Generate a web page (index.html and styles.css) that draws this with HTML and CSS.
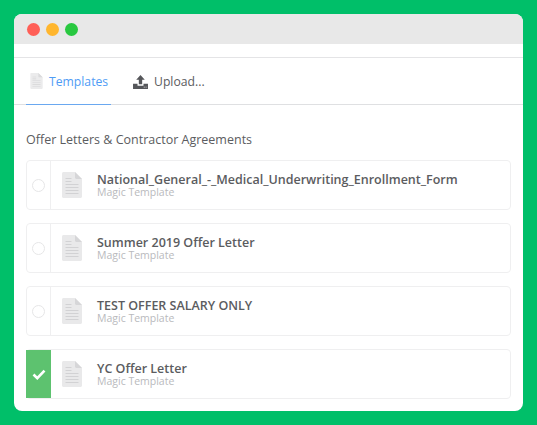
FILE: index.html
```html
<!DOCTYPE html>
<html lang="en">
<head>
    <meta charset="UTF-8">
    <meta name="viewport" content="width=device-width, initial-scale=1.0">
    <title>Templates</title>
    <link rel="stylesheet" href="styles.css">
</head>
<body>
    <svg class="icon-defs" width="0" height="0" aria-hidden="true">
        <symbol id="doc" viewBox="0 0 20 26">
            <path d="M0 1.500C0 .7.7 0 1.500 0H13l7 7v17.500c0 .8-.7 1.500-1.500 1.500h-17C.7 26 0 25.300 0 24.500z" fill="#e9e9ea"/>
            <path d="M13 0l7 7h-5.500C13.700 7 13 6.300 13 5.500z" fill="#d6d6d8"/>
            <path d="M3.500 6h6v1h-6zM3.500 9h6v1h-6zM3.500 12h13v1h-13zM3.500 15h13v1h-13zM3.500 18h13v1h-13zM3.500 21h13v1h-13z" fill="#d2d2d4"/>
        </symbol>
    </svg>

    <div class="window">
        <div class="titlebar">
            <span class="dot red"></span>
            <span class="dot yellow"></span>
            <span class="dot green"></span>
        </div>

        <div class="tabs">
            <a class="tab active" href="#">
                <svg class="tab-doc"><use href="#doc"/></svg>
                Templates
            </a>
            <a class="tab" href="#">
                <svg class="tab-upload" viewBox="0 0 16 15">
                    <path d="M8 0l4.600 5H9.800v5H6.200V5H3.400z" fill="#55565a"/>
                    <path d="M0 9.500h4.800v2h6.400v-2H16V15H0z" fill="#55565a"/>
                    <path d="M11.500 12.500h1v1h-1zM13.500 12.500h1v1h-1z" fill="#fff"/>
                </svg>
                Upload...
            </a>
        </div>

        <div class="content">
            <h2 class="section-title">Offer Letters &amp; Contractor Agreements</h2>

            <div class="template">
                <div class="select"><span class="radio"></span></div>
                <svg class="doc-icon"><use href="#doc"/></svg>
                <div class="template-text">
                    <div class="template-name">National_General_-_Medical_Underwriting_Enrollment_Form</div>
                    <div class="template-type">Magic Template</div>
                </div>
            </div>

            <div class="template">
                <div class="select"><span class="radio"></span></div>
                <svg class="doc-icon"><use href="#doc"/></svg>
                <div class="template-text">
                    <div class="template-name">Summer 2019 Offer Letter</div>
                    <div class="template-type">Magic Template</div>
                </div>
            </div>

            <div class="template">
                <div class="select"><span class="radio"></span></div>
                <svg class="doc-icon"><use href="#doc"/></svg>
                <div class="template-text">
                    <div class="template-name">TEST OFFER SALARY ONLY</div>
                    <div class="template-type">Magic Template</div>
                </div>
            </div>

            <div class="template selected">
                <div class="select">
                    <svg class="check" viewBox="0 0 14 11">
                        <path d="M1.500 5.500l3.800 3.700 7.200-7.500" fill="none" stroke="#fff" stroke-width="2.600"/>
                    </svg>
                </div>
                <svg class="doc-icon"><use href="#doc"/></svg>
                <div class="template-text">
                    <div class="template-name">YC Offer Letter</div>
                    <div class="template-type">Magic Template</div>
                </div>
            </div>
        </div>
    </div>
</body>
</html>
```

FILE: styles.css
```css
* {
    margin: 0;
    padding: 0;
    box-sizing: border-box;
    font-family: 'Open Sans', 'Lato', sans-serif;
}

body {
    height: 425px;
    overflow: hidden;
    background: #00bf69;
    padding: 14px;
}

.icon-defs {
    position: absolute;
}

.window {
    width: 509px;
    height: 397px;
    background: #fff;
    border-radius: 8px;
    overflow: hidden;
}

.titlebar {
    height: 30px;
    background: #e8e8e8;
    display: flex;
    align-items: center;
    padding-left: 13px;
    gap: 6px;
}

.dot {
    width: 13px;
    height: 13px;
    border-radius: 50%;
}

.red { background: #ff5f57; }
.yellow { background: #ffb62e; }
.green { background: #28c840; }

.tabs {
    margin-top: 13px;
    height: 48px;
    display: flex;
    padding-left: 12px;
    border-top: 1px solid #e4e4e6;
    border-bottom: 1px solid #dfe0e2;
}

.tab {
    height: 47px;
    display: flex;
    align-items: center;
    gap: 6px;
    margin-right: 22px;
    color: #5b5c60;
    font-size: 12.2px;
    text-decoration: none;
}

.tab.active {
    width: 85px;
    padding-left: 4px;
    color: #4f9cf5;
    border-bottom: 1px solid #6aa8f0;
}

.tab-doc {
    width: 13px;
    height: 16px;
    opacity: 0.9;
}

.tab-upload {
    width: 15px;
    height: 14px;
}

.content {
    padding: 26px 12px 0;
}

.section-title {
    font-size: 12.5px;
    font-weight: 400;
    line-height: 17px;
    color: #5b5c60;
    margin-bottom: 12px;
}

.template {
    height: 50px;
    display: flex;
    align-items: center;
    margin-bottom: 13px;
    border: 1px solid #efeff0;
    border-radius: 4px;
}

.select {
    width: 24px;
    height: 100%;
    display: flex;
    align-items: center;
    justify-content: center;
    border-right: 1px solid #efeff0;
}

.radio {
    width: 13px;
    height: 13px;
    border-radius: 50%;
    border: 1px solid #e6e6e7;
}

.selected .select {
    width: 25px;
    margin-left: -1px;
    background: #5dc26f;
    border-right: none;
}

.check {
    width: 14px;
    height: 11px;
}

.doc-icon {
    width: 20px;
    height: 26px;
    margin: 0 15px 0 11px;
}

.template-text {
    padding-top: 1px;
}

.template-name {
    font-size: 12.5px;
    font-weight: 600;
    line-height: 13px;
    color: #5b5c60;
}

.template-type {
    font-size: 10.5px;
    line-height: 12px;
    color: #b9babd;
}
```
